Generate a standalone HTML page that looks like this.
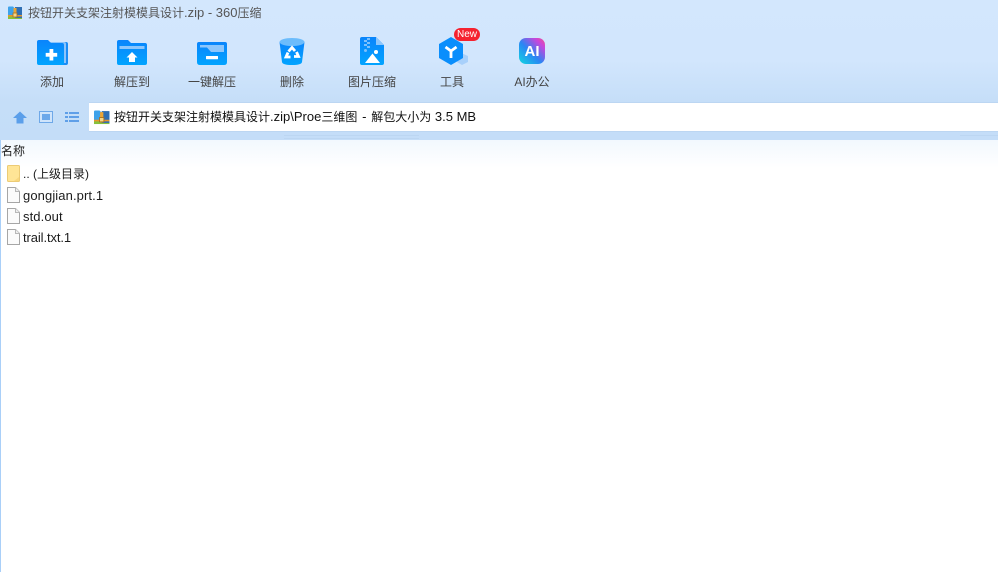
<!DOCTYPE html>
<html><head><meta charset="utf-8"><style>
html,body{margin:0;padding:0;background:#fff}
body{width:998px;height:572px;position:relative;overflow:hidden;font-family:"Liberation Sans","Noto Sans CJK SC",sans-serif;font-size:12px;color:#222}
.a{position:absolute;white-space:nowrap}
.bg{left:0;top:0;width:998px;height:140px;background:linear-gradient(#d3e7fd 0,#d2e6fd 60px,#c5def8 102px,#c4ddf8 140px)}
.fade{left:0;top:140px;width:998px;height:28px;background:linear-gradient(#f2f8fe,#fff)}
.lb{left:0;top:140px;width:1px;height:432px;background:#a9cff8}
.addr{left:89px;top:103px;width:909px;height:28px;background:#fff;box-shadow:0 -1px 0 #bcd6f2,0 1px 0 #bcd6f2}
.lab{top:74px;width:100px;text-align:center;color:#444;font-size:12px;line-height:16px}
.t{font-size:13px;line-height:16px;color:#1c1c1c;left:23px;letter-spacing:.1px;top:0}
.l13{font-size:13px}
svg{position:absolute;overflow:visible}
</style></head><body>
<div class="a bg"></div><div class="a fade"></div><div class="a lb"></div>
<div class="a" style="left:284px;top:135px;width:135px;height:1px;background:#bcd6f2"></div>
<div class="a" style="left:284px;top:138px;width:135px;height:1px;background:#bcd6f2"></div>
<div class="a" style="left:960px;top:135px;width:38px;height:1px;background:#bcd6f2"></div>
<div class="a addr"></div>

<svg style="left:0;top:0" width="0" height="0"><defs>
<linearGradient id="b" x1="0" y1="0" x2="0" y2="1"><stop offset="0" stop-color="#0a84fb"/><stop offset="1" stop-color="#02a4ff"/></linearGradient>
<linearGradient id="ai" x1="0" y1="1" x2="1" y2="0"><stop offset="0" stop-color="#12d8e0"/><stop offset=".45" stop-color="#2a86f4"/><stop offset=".8" stop-color="#c846dc"/><stop offset="1" stop-color="#f0508c"/></linearGradient>
<g id="zip"><path d="M0 1.500Q0 .5 1 .5H5L6.500 2H14V13H0Z" fill="#3ea2ea"/><rect y="10" width="14" height="3" fill="#86c13c"/><rect x="7" y="1" width="7" height="11" fill="#2f6fb4"/><rect y="9" width="14" height="1.500" fill="#e8952c"/><rect x="5.500" y="2" width="3" height="9.500" fill="#eda533"/><rect x="5" y="7" width="4" height="4" fill="#f4d58a" stroke="#a8701c" stroke-width=".8"/></g>
<g id="doc"><path d="M.5.500H8.500L12.500 4.500V15.500H.5Z" fill="#fbfbfb" stroke="#a6a6a6"/><path d="M8.500.500V4.500H12.500" fill="#eee" stroke="#b8b8b8"/></g>
</defs></svg>

<svg style="left:8px;top:6px" width="14" height="13"><use href="#zip"/></svg>
<div class="a" style="left:28px;top:5px;line-height:16px;color:#555">按钮开关支架注射模模具设计<span class="l13">.zip - 360</span>压缩</div>

<!-- add -->
<svg style="left:37px;top:40px" width="32" height="26"><path d="M10 2H29Q31 2 31 4V23Q31 25 29 25H10Z" fill="#1a8cf6"/><path d="M10 2H27Q29 2 29 4V23H10Z" fill="#8cc4fb"/><path d="M0 2Q0 0 2 0H11L14 3H25Q27 3 27 5V23Q27 25 25 25H2Q0 25 0 23Z" fill="url(#b)"/><rect x="12.500" y="9" width="3.800" height="11.500" fill="#fff"/><rect x="8.700" y="12.900" width="11.500" height="3.800" fill="#fff"/></svg>
<div class="a lab" style="left:2px">添加</div>

<!-- extract to -->
<svg style="left:117px;top:40px" width="30" height="26"><path d="M0 2Q0 0 2 0H11L14 3H28Q30 3 30 5V23Q30 25 28 25H2Q0 25 0 23Z" fill="url(#b)"/><path d="M2.500 6H27.500V9H2.500Z" fill="#8cc6fc"/><path d="M15 12L20.500 17.500H18V22H12V17.500H9.500Z" fill="#fff"/></svg>
<div class="a lab" style="left:82px">解压到</div>

<!-- one-click -->
<svg style="left:197px;top:42px" width="30" height="24"><path d="M2 0H28Q30 0 30 2V20Q30 23 27 23H3Q0 23 0 20V2Q0 0 2 0Z" fill="url(#b)"/><path d="M3 3H27V10H14L10 5.500H3Z" fill="#8cc6fc"/><rect x="9" y="14" width="12" height="3.200" rx=".5" fill="#fff"/></svg>
<div class="a lab" style="left:162px">一键解压</div>

<!-- delete -->
<svg style="left:279px;top:37px" width="26" height="29"><path d="M.5 5L3 25Q3.500 28 13 28T23 25L25.500 5Z" fill="url(#b)"/><ellipse cx="13" cy="5" rx="12.500" ry="4" fill="#6cbcfc"/><g fill="none" stroke="#fff" stroke-width="2.800"><path d="M9.500 14.500L13 10.500 16 14"/><path d="M17.500 15L19.500 19.500H15"/><path d="M11.500 20H7L9 15.500"/></g></svg>
<div class="a lab" style="left:242px">删除</div>

<!-- image compress -->
<svg style="left:360px;top:37px" width="25" height="29"><path d="M2 0H16L24 8V26Q24 28 22 28H2Q0 28 0 26V2Q0 0 2 0Z" fill="url(#b)"/><path d="M16 0L24 8H16Z" fill="#8cc6fc"/><g fill="#7cc0fc"><rect x="7" y="1" width="3" height="2"/><rect x="4" y="3" width="3" height="2"/><rect x="7" y="5" width="3" height="2"/><rect x="4" y="7" width="3" height="2"/><rect x="7" y="9" width="3" height="2"/><circle cx="5.500" cy="13.500" r="1.500"/></g><circle cx="16" cy="15" r="2" fill="#fff"/><path d="M5 26L12.500 16.500L20 26Z" fill="#fff"/></svg>
<div class="a lab" style="left:322px">图片压缩</div>

<!-- tools -->
<svg style="left:438px;top:37px" width="32" height="29"><path d="M21 15L30 19V25L24 28L19 25Z" fill="#a8d0fb"/><path d="M13 0L25 7V21L13 28L1 21V7Z" fill="#0a8efc"/><path d="M7.500 10L13 14L18.500 10M13 14V21" fill="none" stroke="#fff" stroke-width="2.800"/></svg>
<div class="a" style="left:454px;top:28px;width:26px;height:13px;border-radius:7px;background:#f5222f;color:#fff;font-size:10px;line-height:13px;text-align:center">New</div>
<div class="a lab" style="left:402px">工具</div>

<!-- AI -->
<svg style="left:519px;top:38px" width="26" height="26"><rect width="26" height="26" rx="7" fill="url(#ai)"/></svg>
<div class="a" style="left:519px;top:39px;width:26px;line-height:26px;text-align:center;color:#fff;font-size:15px;font-weight:bold">AI</div>
<div class="a lab" style="left:482px">AI办公</div>

<!-- nav icons -->
<svg style="left:13px;top:111px" width="14" height="13"><path d="M7 .5L14 7H10.500V12.500H3.500V7H0Z" fill="#5b9fea"/></svg>
<svg style="left:39px;top:111px" width="14" height="12"><rect x=".5" y=".5" width="13" height="11" fill="#cfe4fb" stroke="#6ea8e8"/><rect x="3" y="3" width="8" height="6" fill="#6ca8ea"/></svg>
<svg style="left:65px;top:112px" width="14" height="10" fill="#5f9fe8"><rect width="3" height="2"/><rect x="4" width="10" height="2"/><rect y="4" width="3" height="2"/><rect x="4" y="4" width="10" height="2"/><rect y="8" width="3" height="2"/><rect x="4" y="8" width="10" height="2"/></svg>

<svg style="left:94px;top:110px" width="16" height="14"><use href="#zip" transform="scale(1.100 1.080)"/></svg>
<div class="a" style="left:114px;top:109px;line-height:16px;color:#111">按钮开关支架注射模模具设计<span class="l13">.zip\Proe</span>三维图<span class="l13" style="padding:0 1.200px"> - </span>解包大小为<span class="l13"> 3.5 MB</span></div>

<div class="a" style="left:1px;top:143px;line-height:16px;color:#222">名称</div>

<!-- rows -->
<svg style="left:7px;top:165px" width="13" height="17"><path d="M.5 1.500Q.5.500 1.500.500H11.500Q12.500.500 12.500 1.500V15.500Q12.500 16.500 11.500 16.500H1.500Q.5 16.500 .5 15.500Z" fill="#ffe596" stroke="#eccb75"/><path d="M7 16L12 12V16Z" fill="#f8d77e"/></svg>
<div class="a t" style="top:166px;font-size:12px;letter-spacing:0">.. (上级目录)</div>
<svg style="left:7px;top:187px" width="13" height="17"><use href="#doc"/></svg>
<div class="a t" style="top:188px">gongjian.prt.1</div>
<svg style="left:7px;top:208px" width="13" height="17"><use href="#doc"/></svg>
<div class="a t" style="top:209px">std.out</div>
<svg style="left:7px;top:229px" width="13" height="17"><use href="#doc"/></svg>
<div class="a t" style="top:230px;letter-spacing:-.1px">trail.txt.1</div>
</body></html>
